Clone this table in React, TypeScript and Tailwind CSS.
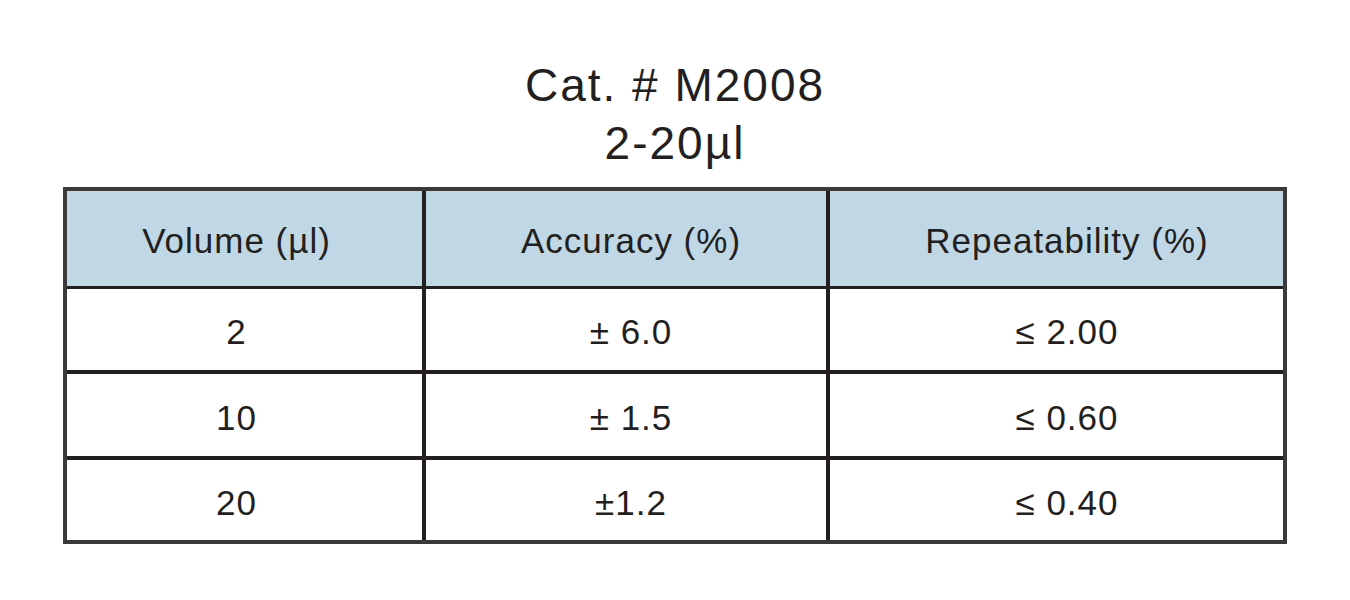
const rows = [
  { volume: "2", accuracy: "± 6.0", repeat: "≤ 2.00", h: "h-[85px] border-b-4 border-[#231f20]" },
  { volume: "10", accuracy: "± 1.5", repeat: "≤ 0.60", h: "h-[86px] border-b-4 border-[#231f20]" },
  { volume: "20", accuracy: "±1.2", repeat: "≤ 0.40", h: "h-[80px]" },
];

// text in the source sits a little off the cell centres
const col1 = "w-[359px] border-r-4 border-[#231f20] flex items-center justify-center pt-[6px] pr-[16px]";
const col2 = "w-[404px] border-r-4 border-[#231f20] flex items-center justify-center pt-[6px] pl-[10px]";
const col3 = "flex-1 flex items-center justify-center pt-[6px] pl-[21px]";

export default function App() {
  return (
    <div className="w-[1350px] h-[600px] bg-white text-[#231f20] flex flex-col items-center pt-[56px] font-['Liberation_Sans',Arial,Helvetica,sans-serif]">
      <div className="text-[46px] leading-[58px] tracking-[2px] text-center">
        <div>Cat. # M2008</div>
        <div>2-20µl</div>
      </div>

      <div className="mt-[15px] w-[1224px] border-4 border-[#3b393a] text-[35px] tracking-[1px]">
        {/* header */}
        <div className="flex h-[98px] bg-[#c0d8e5] border-b-[3px] border-[#231f20]">
          <div className={col1}>Volume (µl)</div>
          <div className={col2}>Accuracy (%)</div>
          <div className={col3}>Repeatability (%)</div>
        </div>

        {rows.map((r) => (
          <div key={r.volume} className={`flex ${r.h}`}>
            <div className={col1}>{r.volume}</div>
            <div className={col2}>{r.accuracy}</div>
            <div className={col3}>{r.repeat}</div>
          </div>
        ))}
      </div>
    </div>
  );
}
